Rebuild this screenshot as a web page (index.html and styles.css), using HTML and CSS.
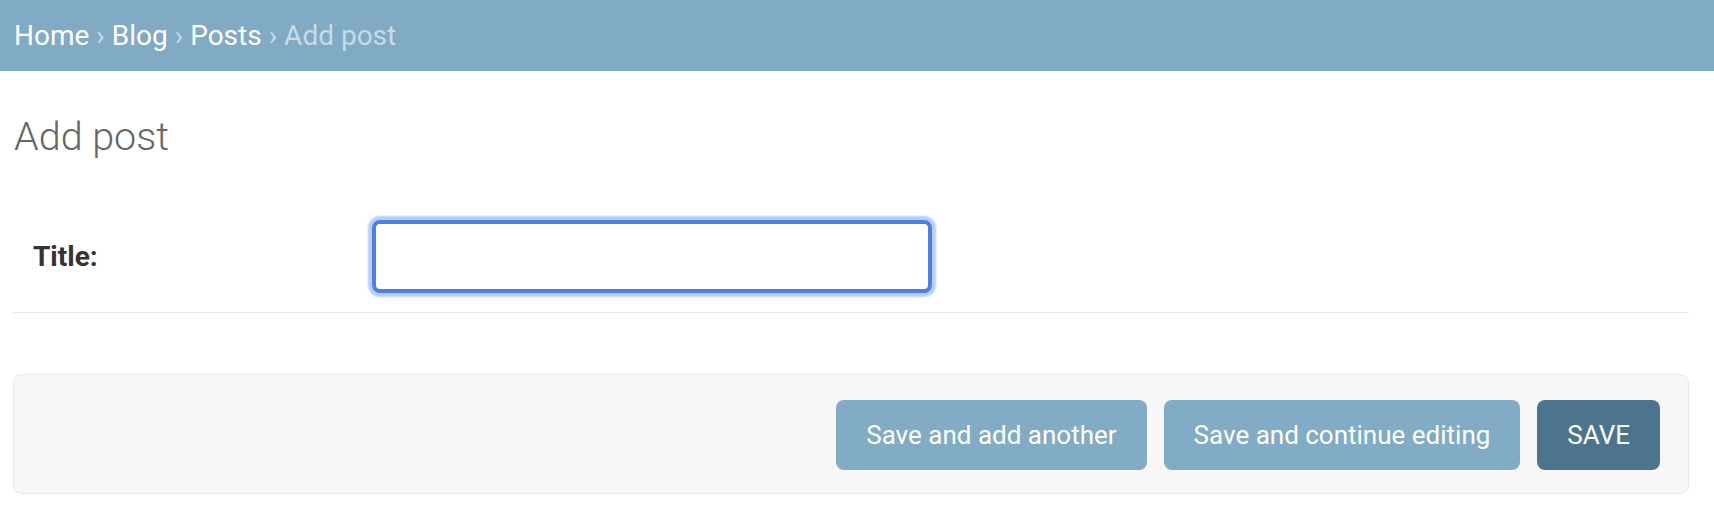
FILE: index.html
```html
<!DOCTYPE html>
<html lang="en">
<head>
<meta charset="utf-8">
<title>Add post</title>
<link rel="stylesheet" href="styles.css">
</head>
<body>
<nav class="breadcrumbs">
  <a href="#">Home</a><span class="sep">›</span><a href="#">Blog</a><span class="sep">›</span><a href="#">Posts</a><span class="sep">›</span><span class="current">Add post</span>
</nav>
<main class="content">
  <h1 class="page-title">Add post</h1>
  <form class="post-form">
    <div class="form-row">
      <label class="field-label" for="id_title">Title:</label>
      <input class="field-input" id="id_title" type="text">
    </div>
    <div class="submit-row">
      <button type="button" class="btn">Save and add another</button>
      <button type="button" class="btn">Save and continue editing</button>
      <button type="button" class="btn btn-default">SAVE</button>
    </div>
  </form>
</main>
</body>
</html>
```

FILE: styles.css
```css
html, body {
  margin: 0;
  padding: 0;
  background: #ffffff;
  font-family: Roboto, "Liberation Sans", Arial, sans-serif;
}

.breadcrumbs {
  height: 71px;
  display: flex;
  align-items: center;
  padding: 0 14px;
  background: #81aac4;
  font-size: 28px;
  color: #c6dbe8;
}

.breadcrumbs a {
  color: #ffffff;
  text-decoration: none;
}

.breadcrumbs .sep {
  margin: 0 7px;
  color: #c6dbe8;
}

.breadcrumbs .current {
  color: #c6dbe8;
}

.content {
  padding: 0 25px 0 13px;
}

.page-title {
  margin: 42px 0 0 0;
  font-size: 39.5px;
  line-height: 47px;
  font-weight: 300;
  color: #666666;
  padding-left: 1px;
}

.post-form {
  margin-top: 44px;
}

.form-row {
  display: flex;
  align-items: center;
  padding: 16px 20px 19px 20px;
  border-bottom: 1px solid #e8e8e8;
}

.field-label {
  width: 339px;
  font-size: 28px;
  font-weight: 700;
  color: #333333;
}

.field-input {
  box-sizing: border-box;
  width: 560px;
  height: 73px;
  border: 4px solid #4f80de;
  border-radius: 8px;
  box-shadow: 0 0 2px 4px rgba(120, 165, 245, 0.55);
  background: #ffffff;
  outline: none;
  margin: 0;
}

.submit-row {
  margin-top: 61px;
  display: flex;
  justify-content: flex-end;
  gap: 17px;
  padding: 25px 28px 23px 28px;
  background: #f7f7f7;
  border: 1px solid #e9e9e9;
  border-radius: 8px;
}

.btn {
  height: 70px;
  padding: 0 30px;
  border: none;
  border-radius: 8px;
  background: #82abc5;
  color: #ffffff;
  font-family: Roboto, "Liberation Sans", Arial, sans-serif;
  font-size: 26px;
  cursor: pointer;
}

.btn-default {
  background: #4c758d;
}
```
